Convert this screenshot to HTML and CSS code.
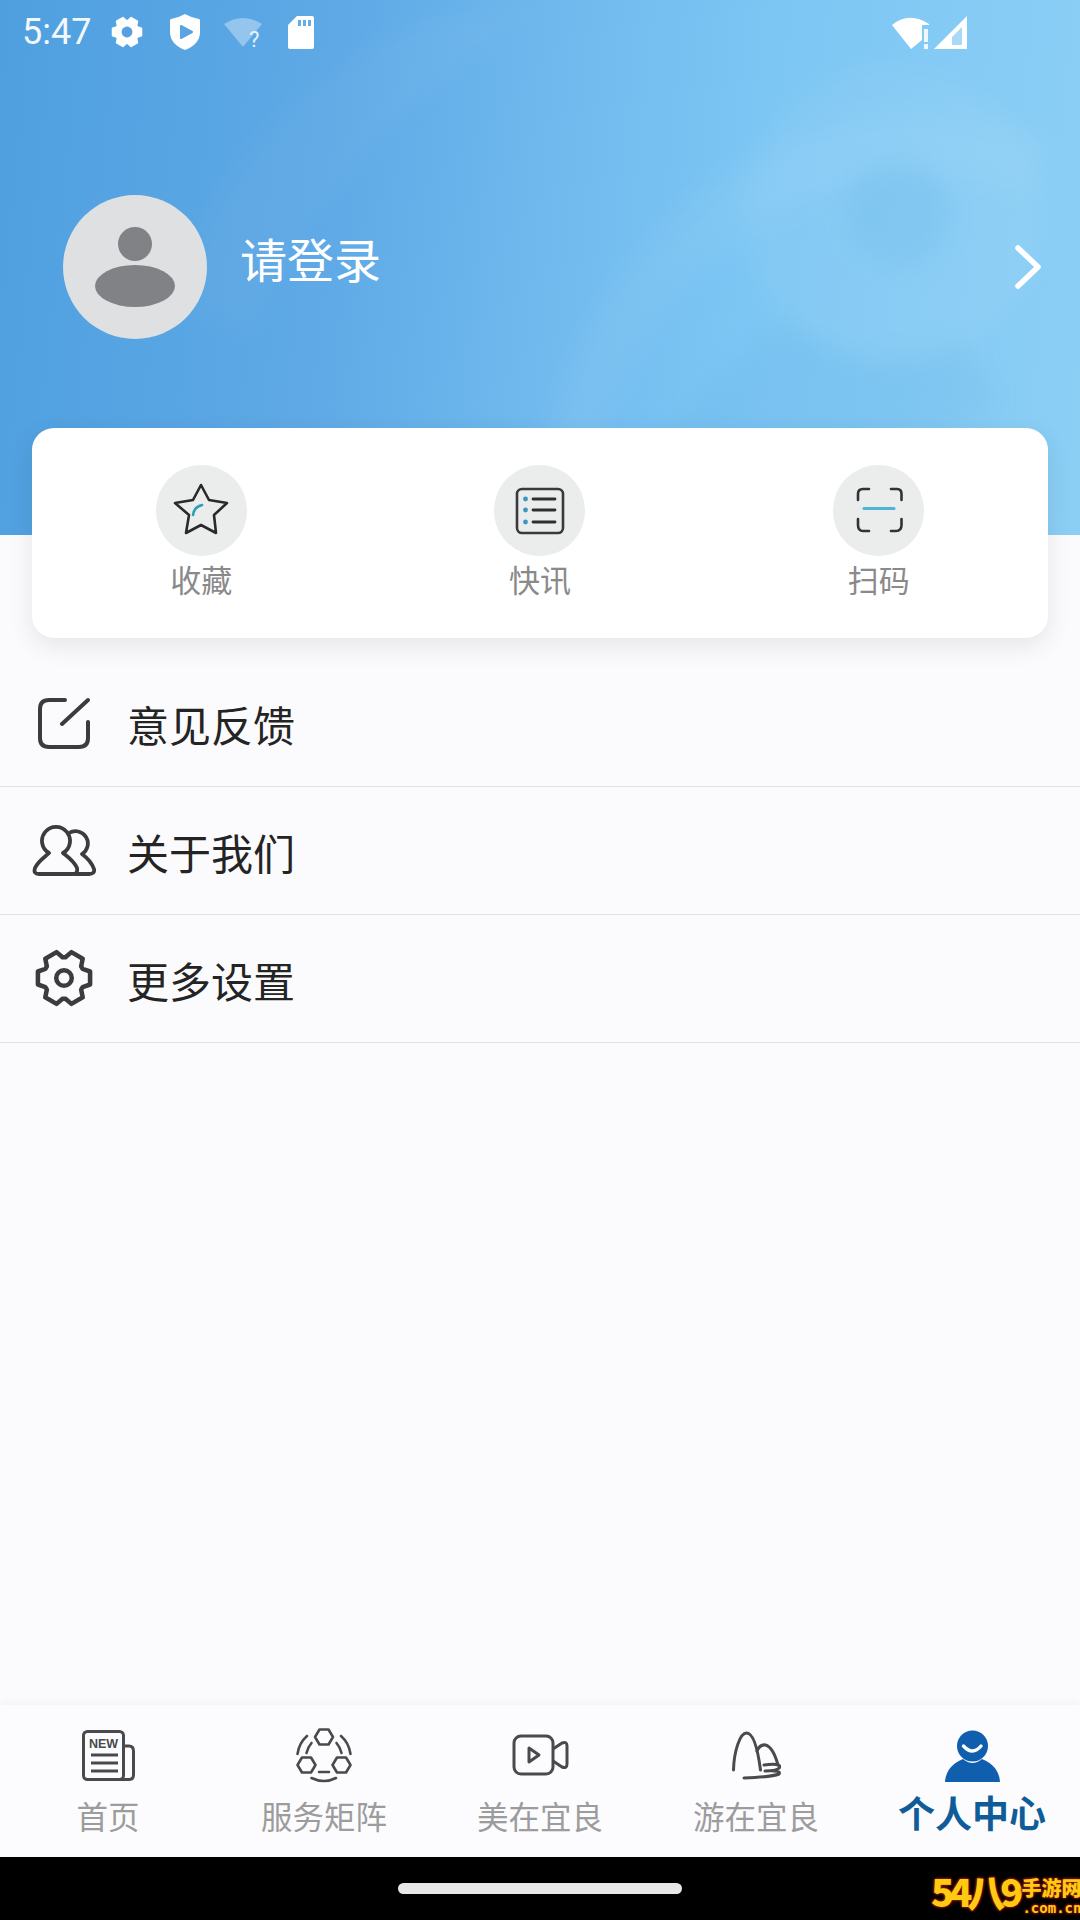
FILE: index.html
```html
<!DOCTYPE html>
<html>
<head>
    <title>个人中心</title>
    <meta charset="utf-8">
    <link rel="stylesheet" href="styles.css">
</head>
<body>
    <div class="page">
        <div class="header">
            <!-- faint swirl behind the header -->
            <svg class="swirl" width="1080" height="535" viewBox="0 0 1080 535">
                <path d="M170 300 Q230 110 420 20 L560 0 Q340 130 250 340 Z" fill="#ffffff" opacity="0.03"/>
                <path d="M560 535 Q570 300 760 190 Q900 110 1040 170" fill="none" stroke="#ffffff" stroke-width="60" opacity="0.05"/>
                <circle cx="895" cy="215" r="150" fill="#ffffff" opacity="0.05"/>
                <circle cx="898" cy="213" r="52" fill="#4f9fdc" opacity="0.13"/>
                <path d="M640 535 Q660 400 790 320 Q860 380 960 340 L1000 400 Q860 480 740 535 Z" fill="#4f9fdc" opacity="0.1"/>
            </svg>

            <div class="status-bar">
                <span class="time">5:47</span>
                <svg class="st-gear" width="32" height="34" viewBox="-28 -28 56 56">
                    <path fill="#fff" fill-rule="evenodd" stroke="#fff" stroke-width="3" stroke-linejoin="round" d="M25.2 -6.3 L25.2 6.3 L18 8.8 L16.6 11.2 L18.1 18.7 L7.2 25 L1.4 20 L-1.4 20 L-7.2 25 L-18.1 18.7 L-16.6 11.2 L-18 8.8 L-25.2 6.3 L-25.2 -6.3 L-18 -8.8 L-16.6 -11.2 L-18.1 -18.7 L-7.2 -25 L-1.4 -20 L1.4 -20 L7.2 -25 L18.1 -18.7 L16.6 -11.2 L18 -8.8 Z"/>
                    <circle r="9.5" fill="#569fe0"/>
                </svg>
                <svg class="st-shield" width="30" height="36" viewBox="0 0 30 36">
                    <path fill="#fff" d="M15 0 Q22 4 29 5 Q30 5 30 7 V18 Q30 30 15 36 Q0 30 0 18 V7 Q0 5 1 5 Q8 4 15 0 Z"/>
                    <path fill="#5aa4e4" stroke="#5aa4e4" stroke-width="2" stroke-linejoin="round" d="M11 12 L22 18 L11 24 Z"/>
                </svg>
                <svg class="st-wifi" width="38" height="34" viewBox="0 0 38 34">
                    <path fill="#fff" opacity="0.35" d="M0 6 Q19 -6 38 6 L19 29 Z"/>
                    <text x="25" y="29" class="st-question">?</text>
                </svg>
                <svg class="st-sd" width="26" height="33" viewBox="0 0 26 33">
                    <path fill="#fff" d="M9 0 H24 Q26 0 26 2 V31 Q26 33 24 33 H2 Q0 33 0 31 V9 Z"/>
                    <path fill="#64ade8" d="M10 4 H13 V10 H10 Z M15 4 H18 V10 H15 Z M20 4 H23 V10 H20 Z"/>
                </svg>
                <svg class="st-wifi-right" width="38" height="33" viewBox="0 0 38 33">
                    <path fill="#fff" d="M0 9 Q17 -5 37 8 L37 9 H30 V24 L19 33 Z"/>
                    <path fill="#fff" opacity="0.85" d="M32 13 H36 V26 H32 Z M32 28 H36 V33 H32 Z"/>
                </svg>
                <svg class="st-signal" width="33" height="33" viewBox="0 0 33 33">
                    <path fill="#fff" d="M33 0 V33 H0 Z"/>
                    <path fill="#a8d9f6" d="M18 21 L28 11 V29 H18 Z"/>
                </svg>
            </div>

            <div class="profile">
                <div class="avatar">
                    <svg width="80" height="80" viewBox="0 0 80 80">
                        <circle cx="40" cy="17" r="17" fill="#808285"/>
                        <ellipse cx="40" cy="59" rx="40" ry="21" fill="#808285"/>
                    </svg>
                </div>
                <span class="login-text">请登录</span>
                <svg class="chevron" width="26" height="44" viewBox="0 0 26 44">
                    <path d="M3 3 L23 22 L3 41" fill="none" stroke="#fff" stroke-width="5.500" stroke-linecap="round" stroke-linejoin="round"/>
                </svg>
            </div>
        </div>

        <div class="card">
            <div class="card-item">
                <div class="circle">
                    <svg width="91" height="91" viewBox="0 0 91 91">
                        <path d="M45 20 L53 35 L71 38 L58 50 L60 68 L45 60 L30 68 L33 50 L19 38 L37 35 Z" fill="none" stroke="#2a2a2c" stroke-width="2.6" stroke-linejoin="round"/>
                        <path d="M37 50 Q38 42 46 40" fill="none" stroke="#2a9fb5" stroke-width="2.6" stroke-linecap="round"/>
                    </svg>
                </div>
                <span class="card-label">收藏</span>
            </div>
            <div class="card-item">
                <div class="circle">
                    <svg width="91" height="91" viewBox="0 0 91 91">
                        <rect x="23" y="24" width="46" height="44" rx="5" fill="none" stroke="#3a3a3c" stroke-width="2.6"/>
                        <circle cx="31.5" cy="34" r="2.4" fill="#3a97c4"/>
                        <circle cx="31.5" cy="45" r="2.4" fill="#3a97c4"/>
                        <circle cx="31.5" cy="57" r="2.4" fill="#3a97c4"/>
                        <path d="M39 34 H61 M39 45 H61 M39 57 H61" stroke="#2f2f31" stroke-width="2.8" stroke-linecap="round"/>
                    </svg>
                </div>
                <span class="card-label">快讯</span>
            </div>
            <div class="card-item">
                <div class="circle">
                    <svg width="91" height="91" viewBox="0 0 91 91">
                        <path d="M25 35 V29 Q25 24 30 24 H36 M58 24 H64 Q68.500 24 68.500 29 V35 M68.500 54 V60 Q68.500 66 63 66 H58 M36 66 H30 Q25 66 25 60 V54" fill="none" stroke="#333335" stroke-width="2.6" stroke-linecap="round"/>
                        <path d="M31 43.500 H61" stroke="#4db4d6" stroke-width="3" stroke-linecap="round"/>
                    </svg>
                </div>
                <span class="card-label">扫码</span>
            </div>
        </div>

        <div class="menu">
            <div class="menu-row">
                <div class="menu-icon">
                    <svg width="52" height="52" viewBox="0 0 52 52">
                        <path d="M27 3 H11 Q2 3 2 12 V41 Q2 50 11 50 H41 Q50 50 50 41 V25 M24 27 L50 3" fill="none" stroke="#3c3c3e" stroke-width="4" stroke-linecap="round" stroke-linejoin="round"/>
                    </svg>
                </div>
                <span class="menu-text">意见反馈</span>
            </div>
            <div class="menu-row">
                <div class="menu-icon">
                    <svg class="icon-shift" width="64" height="52" viewBox="0 0 64 52">
                        <path d="M17 29 A14 14 0 1 1 31 29 C36 33 42 37 45 44 Q46 50 41 50 H7 Q1 50 3 44 C6 37 13 33 17 29 Z" fill="none" stroke="#3c3c3e" stroke-width="3.8" stroke-linejoin="round"/>
                        <path d="M37 9 A12 12 0 1 1 50 30 C54 33 60 39 62 45 Q63 50 57 50 H43" fill="none" stroke="#3c3c3e" stroke-width="3.8" stroke-linecap="round" stroke-linejoin="round"/>
                    </svg>
                </div>
                <span class="menu-text">关于我们</span>
            </div>
            <div class="menu-row">
                <div class="menu-icon">
                    <svg class="icon-shift" width="60" height="58" viewBox="-29 -28 58 56">
                        <path d="M25.2 -6.3 L25.2 6.3 L18 8.8 L16.6 11.2 L18.1 18.7 L7.2 25 L1.4 20 L-1.4 20 L-7.2 25 L-18.1 18.7 L-16.6 11.2 L-18 8.8 L-25.2 6.3 L-25.2 -6.3 L-18 -8.8 L-16.6 -11.2 L-18.1 -18.7 L-7.2 -25 L-1.4 -20 L1.4 -20 L7.2 -25 L18.1 -18.7 L16.6 -11.2 L18 -8.8 Z" fill="none" stroke="#3c3c3e" stroke-width="4.400" stroke-linejoin="round"/>
                        <circle r="7.5" fill="none" stroke="#3c3c3e" stroke-width="4.400"/>
                    </svg>
                </div>
                <span class="menu-text">更多设置</span>
            </div>
        </div>

        <div class="spacer"></div>

        <div class="nav">
            <div class="nav-item">
                <div class="nav-icon">
                    <svg width="53" height="51" viewBox="0 0 53 51">
                        <rect x="1.500" y="1.500" width="40" height="48" rx="4" fill="none" stroke="#4a4a4c" stroke-width="3"/>
                        <path d="M41 16 H47 Q51.500 16 51.500 21 V45 Q51.500 49.500 47 49.500 H38" fill="none" stroke="#4a4a4c" stroke-width="3"/>
                        <text x="21.500" y="18" class="new-text">NEW</text>
                        <path d="M9 25 H36 M9 33 H36 M9 41 H36" stroke="#4a4a4c" stroke-width="2.8"/>
                    </svg>
                </div>
                <span class="nav-label">首页</span>
            </div>
            <div class="nav-item">
                <div class="nav-icon">
                    <svg width="56" height="55" viewBox="0 0 56 55">
                        <g fill="none" stroke="#4a4a4c" stroke-width="2.6" stroke-linecap="round" stroke-linejoin="round">
                            <path d="M19 9 L23.500 1.500 H32.500 L37 9 L32.500 16.500 H23.500 Z"/>
                            <path d="M1.500 37 L6 29.500 H15 L19.500 37 L15 44.500 H6 Z"/>
                            <path d="M36.500 37 L41 29.500 H50 L54.500 37 L50 44.500 H41 Z"/>
                            <path d="M11 8 Q3 15 1.500 26 M15.500 15 Q12 19 10.500 25"/>
                            <path d="M45 8 Q53 15 54.500 26 M40.500 15 Q44 19 45.500 25"/>
                            <path d="M23 44 H33 M15.500 50 Q28 56 40 50"/>
                        </g>
                    </svg>
                </div>
                <span class="nav-label">服务矩阵</span>
            </div>
            <div class="nav-item">
                <div class="nav-icon">
                    <svg width="57" height="42" viewBox="0 0 57 42">
                        <g fill="none" stroke="#4a4a4c" stroke-width="3" stroke-linejoin="round">
                            <rect x="2" y="2" width="39" height="38" rx="7"/>
                            <path d="M41 15 L50 9 Q55 7 55 12 V30 Q55 35 50 33 L41 27"/>
                            <path d="M17 14 L27 21 L17 28 Z"/>
                        </g>
                    </svg>
                </div>
                <span class="nav-label">美在宜良</span>
            </div>
            <div class="nav-item">
                <div class="nav-icon">
                    <svg width="49" height="49" viewBox="0 0 49 49">
                        <g fill="none" stroke="#4a4a4c" stroke-width="3" stroke-linecap="round" stroke-linejoin="round">
                            <path d="M1.500 39 C2 20 8 2 14.500 2 C22 2 26 20 28.500 39"/>
                            <path d="M25 20 Q28 13 33.500 14 Q41 16 46 34"/>
                            <path d="M32 34 Q48 32 48 36 Q46 40 33 40 Q50 39 47 43 Q40 46 12 47"/>
                        </g>
                    </svg>
                </div>
                <span class="nav-label">游在宜良</span>
            </div>
            <div class="nav-item">
                <div class="nav-icon">
                    <svg width="55" height="53" viewBox="0 0 55 53">
                        <circle cx="27.500" cy="17" r="15.500" fill="#0f5fae"/>
                        <path d="M18.500 17 Q27.500 27 36 17" fill="none" stroke="#fff" stroke-width="3.400" stroke-linecap="round"/>
                        <path d="M0 53 Q1 37 18 30 Q27.500 38 37 30 Q54 37 55 53 Z" fill="#0f5fae"/>
                    </svg>
                </div>
                <span class="nav-label nav-label-active">个人中心</span>
            </div>
        </div>

        <div class="gesture-bar">
            <div class="home-pill"></div>
            <div class="watermark">
                <span class="wm-number">54八9</span>
                <span class="wm-side">
                    <span class="wm-site">手游网</span>
                    <span class="wm-domain">.com.cn</span>
                </span>
            </div>
        </div>
    </div>
</body>
</html>
```

FILE: styles.css
```css
body {
    margin: 0;
    font-family: "Noto Sans CJK SC", "Noto Sans", sans-serif;
    background-color: #000;
}

.page {
    width: 1080px;
    height: 1920px;
    display: flex;
    flex-direction: column;
    background-color: #fbfbfd;
    overflow: hidden;
}

.header {
    position: relative;
    height: 535px;
    flex-shrink: 0;
    background: linear-gradient(96deg, #4f9fdf 0%, #5ea9e6 30%, #6fb9ee 50%, #7cc6f4 68%, #8ccff5 100%);
}

.swirl {
    position: absolute;
    top: 0;
    left: 0;
    filter: blur(12px);
}

.status-bar {
    position: relative;
    height: 64px;
    display: flex;
    align-items: center;
    padding-left: 22px;
}

.time {
    width: 70px;
    font-family: Roboto, sans-serif;
    font-size: 36px;
    white-space: nowrap;
    color: #f2f8fd;
}

.st-gear {
    margin-left: 19px;
}

.st-shield {
    margin-left: 27px;
}

.st-wifi {
    margin-left: 24px;
    margin-top: 6px;
}

.st-question {
    font-family: Roboto, sans-serif;
    font-size: 22px;
    fill: #e6f3fc;
}

.st-sd {
    margin-left: 26px;
}

.st-wifi-right {
    margin-left: 578px;
}

.st-signal {
    margin-left: 4px;
}

.profile {
    position: relative;
    display: flex;
    align-items: center;
    padding: 131px 39px 0 63px;
}

.avatar {
    width: 144px;
    height: 144px;
    border-radius: 50%;
    background-color: #dfe0e2;
    display: flex;
    align-items: center;
    justify-content: center;
}

.login-text {
    margin-left: 33px;
    margin-bottom: 20px;
    font-size: 47px;
    color: #fff;
}

.chevron {
    margin-left: auto;
}

.card {
    position: relative;
    margin: -107px 32px 0;
    height: 210px;
    flex-shrink: 0;
    display: grid;
    grid-template-columns: repeat(3, 1fr);
    background-color: #fff;
    border-radius: 22px;
    box-shadow: 0 8px 26px rgba(0, 0, 0, 0.09);
}

.card-item {
    display: flex;
    flex-direction: column;
    align-items: center;
    padding-top: 37px;
}

.circle {
    width: 91px;
    height: 91px;
    border-radius: 50%;
    background-color: #ebecec;
}

.circle svg {
    display: block;
}

.card-label {
    font-size: 31px;
    line-height: 44px;
    margin-top: 1px;
    color: #8a8a8a;
}

.menu {
    margin-top: 21px;
}

.menu-row {
    height: 127px;
    display: flex;
    align-items: center;
    border-bottom: 1.5px solid #e4e4e6;
}

.menu-icon {
    width: 127px;
    display: flex;
    justify-content: center;
}

.menu-icon svg {
    display: block;
}

.icon-shift {
    margin-top: -2px;
}

.menu-text {
    font-size: 42px;
    padding-top: 1px;
    color: #242424;
}

.spacer {
    flex: 1;
}

.nav {
    height: 152px;
    flex-shrink: 0;
    display: grid;
    grid-template-columns: repeat(5, 1fr);
    background-color: #fcfcfe;
    box-shadow: 0 -2px 6px rgba(0, 0, 0, 0.04);
}

.nav-item {
    display: flex;
    flex-direction: column;
    align-items: center;
    padding-top: 22px;
}

.nav-icon {
    height: 56px;
    display: flex;
    align-items: center;
    justify-content: center;
}

.new-text {
    font-family: "Liberation Sans", sans-serif;
    font-size: 12.500px;
    font-weight: bold;
    text-anchor: middle;
    fill: #4a4a4c;
}

.nav-label {
    font-size: 31.500px;
    line-height: 44px;
    margin-top: 10px;
    color: #9c9c9c;
}

.nav-label-active {
    font-size: 37px;
    font-weight: 700;
    margin-top: 7px;
    color: #0f5c99;
}

.gesture-bar {
    position: relative;
    height: 63px;
    flex-shrink: 0;
    display: flex;
    justify-content: center;
    padding-top: 26px;
    box-sizing: border-box;
    background-color: #000;
}

.home-pill {
    width: 284px;
    height: 11px;
    border-radius: 6px;
    background-color: #e8e8e8;
}

.watermark {
    position: absolute;
    top: 9px;
    left: 931px;
    display: flex;
    gap: 3px;
    color: #ffcb12;
    font-weight: 900;
    white-space: nowrap;
    text-shadow: 0 0 3px #8a1a00, 0 0 3px #8a1a00, 0 0 3px #8a1a00;
}

.wm-number {
    font-size: 38px;
    line-height: 50px;
    letter-spacing: -5px;
}

.wm-side {
    display: flex;
    flex-direction: column;
    align-self: flex-end;
    align-items: flex-end;
}

.wm-site {
    font-size: 20px;
    line-height: 24px;
}

.wm-domain {
    font-family: "DejaVu Sans Mono", monospace;
    font-size: 14px;
    line-height: 16px;
    font-weight: bold;
}
```
